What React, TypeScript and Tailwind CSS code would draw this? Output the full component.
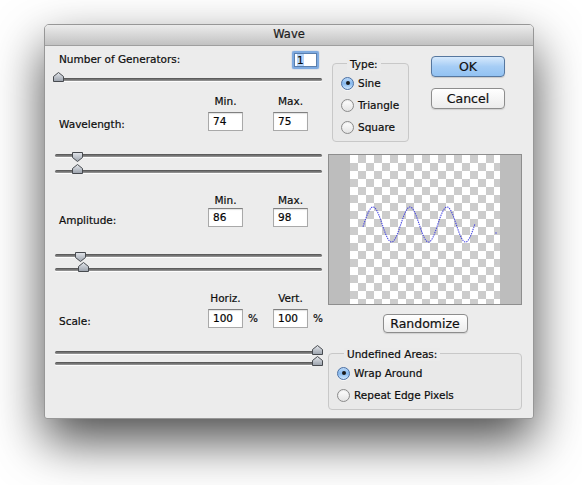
import React from "react";

const wavePts: string = (() => {
  const pts: string[] = [];
  for (let x = 13; x <= 125; x += 0.5) {
    const y = 69.5 - 17.5 * Math.sin((2 * Math.PI * (x - 13.75)) / 37);
    pts.push(`${x.toFixed(2)},${y.toFixed(2)}`);
  }
  return pts.join(" ");
})();

function Thumb({ dir }: { dir: "up" | "down" }) {
  const d =
    dir === "up"
      ? "M5.5 0.5 L10.5 4.5 V9.5 H0.5 V4.5 Z"
      : "M0.5 0.5 H10.5 V5.5 L5.5 9.5 L0.5 5.5 Z";
  return (
    <svg width="11" height="10" viewBox="0 0 11 10">
      <defs>
        <linearGradient id={`th-${dir}`} x1="0" y1="0" x2="0" y2="1">
          <stop offset="0" stopColor="#e4e7ec" />
          <stop offset="1" stopColor="#9aa1ab" />
        </linearGradient>
      </defs>
      <path d={d} fill={`url(#th-${dir})`} stroke="#474a4f" strokeWidth="1" strokeLinejoin="round" />
    </svg>
  );
}

function Track({
  className,
  thumbLeft,
  dir,
}: {
  className: string;
  thumbLeft: string;
  dir: "up" | "down";
}) {
  return (
    <div
      className={`relative h-[3px] rounded-full bg-gradient-to-b from-[#4f4f4f] to-[#9c9c9c] shadow-[0_1px_0_rgba(255,255,255,0.9)] ${className}`}
    >
      <div className={`absolute ${dir === "up" ? "top-[-6px]" : "top-[-2px]"} ${thumbLeft}`}>
        <Thumb dir={dir} />
      </div>
    </div>
  );
}

function Field({ value }: { value: string }) {
  return (
    <div className="w-[35px] h-[19px] bg-white border border-[#a9a9a9] border-t-[#808080] shadow-[inset_0_1px_1px_rgba(0,0,0,0.12)] pl-[4px] text-[10.5px] leading-[17px] text-[#000]">
      {value}
    </div>
  );
}

function Block({
  className,
  label,
  h1,
  h2,
  v1,
  v2,
  gapClass,
  pct,
}: {
  className: string;
  label: string;
  h1: string;
  h2: string;
  v1: string;
  v2: string;
  gapClass: string;
  pct?: boolean;
}) {
  return (
    <div className={`flex items-end ${className}`}>
      <div className="flex-1 pl-[4px] leading-[13px]">{label}</div>
      <div className="w-[35px] flex flex-col items-center">
        <div className={`leading-[13px] ${gapClass}`}>{h1}</div>
        <Field value={v1} />
      </div>
      <div className="w-[30px] h-[19px] flex items-center pl-[5px]">{pct ? "%" : ""}</div>
      <div className="w-[35px] flex flex-col items-center">
        <div className={`leading-[13px] ${gapClass}`}>{h2}</div>
        <Field value={v2} />
      </div>
      <div className="w-[14px] h-[19px] flex items-center pl-[5px]">{pct ? "%" : ""}</div>
    </div>
  );
}

function Radio({ label, checked }: { label: string; checked?: boolean }) {
  return (
    <div className="h-[22px] flex items-center gap-[4px]">
      {checked ? (
        <div className="w-[13px] h-[13px] rounded-full border border-[#4a6fa3] bg-gradient-to-b from-[#b9d8f8] via-[#86b8ee] to-[#cfe6fb] flex items-center justify-center shadow-[0_1px_0_rgba(255,255,255,0.7)]">
          <div className="w-[4px] h-[4px] rounded-full bg-[#1a1a1a]" />
        </div>
      ) : (
        <div className="w-[13px] h-[13px] rounded-full border border-[#8b8b8b] bg-gradient-to-b from-[#ffffff] to-[#e3e3e3] shadow-[inset_0_1px_1px_rgba(0,0,0,0.08)]" />
      )}
      <span className="leading-[13px]">{label}</span>
    </div>
  );
}

export default function App() {
  return (
    <div className="w-[582px] h-[485px] bg-white overflow-hidden pt-[24px] pl-[44px] font-['DejaVu_Sans','Liberation_Sans',sans-serif] text-[10.5px] text-[#0d0d0d] [-webkit-text-stroke:0.2px_#0d0d0d]">
      <div className="w-[490px] h-[395px] bg-[#ececec] border border-[#979797] rounded-t-[5px] rounded-b-[3px] shadow-[0_22px_50px_rgba(0,0,0,0.7)] flex flex-col">
        {/* Title bar */}
        <div className="h-[21px] shrink-0 rounded-t-[4px] border-b border-[#9f9f9f] bg-gradient-to-b from-[#ececec] to-[#c2c2c2] flex items-center justify-center text-[11.5px] text-[#262626]">
          Wave
        </div>

        {/* Body */}
        <div className="flex pl-[10px] gap-[6px]">
          {/* Left column */}
          <div className="w-[267px] flex flex-col">
            <div className="mt-[5px] h-[18px] flex items-center justify-between pl-[4px] pr-[3px]">
              <span>Number of Generators:</span>
              <div className="w-[27px] h-[18px] rounded-[2px] border-2 border-[#7eaae0] shadow-[0_0_1px_#4a7fc4]">
                <div className="w-full h-full bg-white border border-[#5a7fae] pl-[2px] leading-[12px] text-[10.5px]">
                  <span className="bg-[#b5d5fb]">1</span>
                </div>
              </div>
            </div>
            <Track className="mt-[9px]" thumbLeft="left-[-2px]" dir="up" />

            <Block
              className="mt-[14px]"
              label="Wavelength:"
              h1="Min."
              h2="Max."
              v1="74"
              v2="75"
              gapClass="mb-[4px]"
            />
            <Track className="mt-[23px]" thumbLeft="left-[17px]" dir="down" />
            <Track className="mt-[13px]" thumbLeft="left-[17px]" dir="up" />

            <Block
              className="mt-[21px]"
              label="Amplitude:"
              h1="Min."
              h2="Max."
              v1="86"
              v2="98"
              gapClass="mb-[1px]"
            />
            <Track className="mt-[27px]" thumbLeft="left-[20px]" dir="down" />
            <Track className="mt-[11px]" thumbLeft="left-[23px]" dir="up" />

            <Block
              className="mt-[21px]"
              label="Scale:"
              h1="Horiz."
              h2="Vert."
              v1="100"
              v2="100"
              gapClass="mb-[4px]"
              pct
            />
            <Track className="mt-[23px]" thumbLeft="left-[257px]" dir="up" />
            <Track className="mt-[8px]" thumbLeft="left-[257px]" dir="up" />
          </div>

          {/* Right column */}
          <div className="w-[194px] flex flex-col">
            <div className="flex items-start">
              <div className="relative mt-[17px] ml-[4px] w-[77px] h-[79px] rounded-[4px] border border-[#c8c8c8] bg-[#e9e9e9] pt-[8px] pl-[8px]">
                <span className="absolute top-[-6px] left-[14px] px-[3px] bg-[#ebebeb] leading-[13px]">Type:</span>
                <Radio label="Sine" checked />
                <Radio label="Triangle" />
                <Radio label="Square" />
              </div>
              <div className="ml-[22px] mt-[10px] w-[74px] flex flex-col gap-[11px]">
                <button className="h-[21px] rounded-[4px] border border-[#56779f] bg-gradient-to-b from-[#d6e9fc] via-[#a6cdf5] to-[#92c2f2] text-[12.5px] leading-[19px] text-[#111] shadow-[0_1px_1px_rgba(0,0,0,0.15)]">
                  OK
                </button>
                <button className="h-[21px] rounded-[4px] border border-[#8d8d8d] bg-gradient-to-b from-[#ffffff] to-[#ececec] text-[12.5px] leading-[19px] text-[#111] shadow-[0_1px_1px_rgba(0,0,0,0.12)]">
                  Cancel
                </button>
              </div>
            </div>

            <div className="mt-[12px] h-[151px] border border-[#8e8e8e] bg-[#bdbdbd] flex justify-center">
              <svg width="150" height="149" viewBox="0 0 150 149">
                <defs>
                  <pattern id="chk" width="16" height="16" patternUnits="userSpaceOnUse">
                    <rect width="16" height="16" fill="#ffffff" />
                    <rect x="8" y="0" width="8" height="8" fill="#cccccc" />
                    <rect x="0" y="8" width="8" height="8" fill="#cccccc" />
                  </pattern>
                </defs>
                <rect width="150" height="149" fill="url(#chk)" />
                <polyline
                  points={wavePts}
                  fill="none"
                  stroke="#3a3ae0"
                  strokeWidth="1.1"
                  strokeDasharray="1.4 0.9"
                  opacity="0.9"
                />
                <circle cx="146" cy="78" r="0.7" fill="#3a3ae0" />
              </svg>
            </div>

            <button className="mt-[9px] self-center w-[85px] h-[19px] rounded-[4px] border border-[#8d8d8d] bg-gradient-to-b from-[#ffffff] to-[#ececec] text-[12.5px] leading-[17px] text-[#111] shadow-[0_1px_1px_rgba(0,0,0,0.12)]">
              Randomize
            </button>

            <div className="relative mt-[20px] h-[57px] rounded-[4px] border border-[#c8c8c8] bg-[#e9e9e9] pt-[8px] pl-[8px]">
              <span className="absolute top-[-6px] left-[15px] px-[3px] bg-[#ebebeb] leading-[13px]">Undefined Areas:</span>
              <Radio label="Wrap Around" checked />
              <Radio label="Repeat Edge Pixels" />
            </div>
          </div>
        </div>
      </div>
    </div>
  );
}
